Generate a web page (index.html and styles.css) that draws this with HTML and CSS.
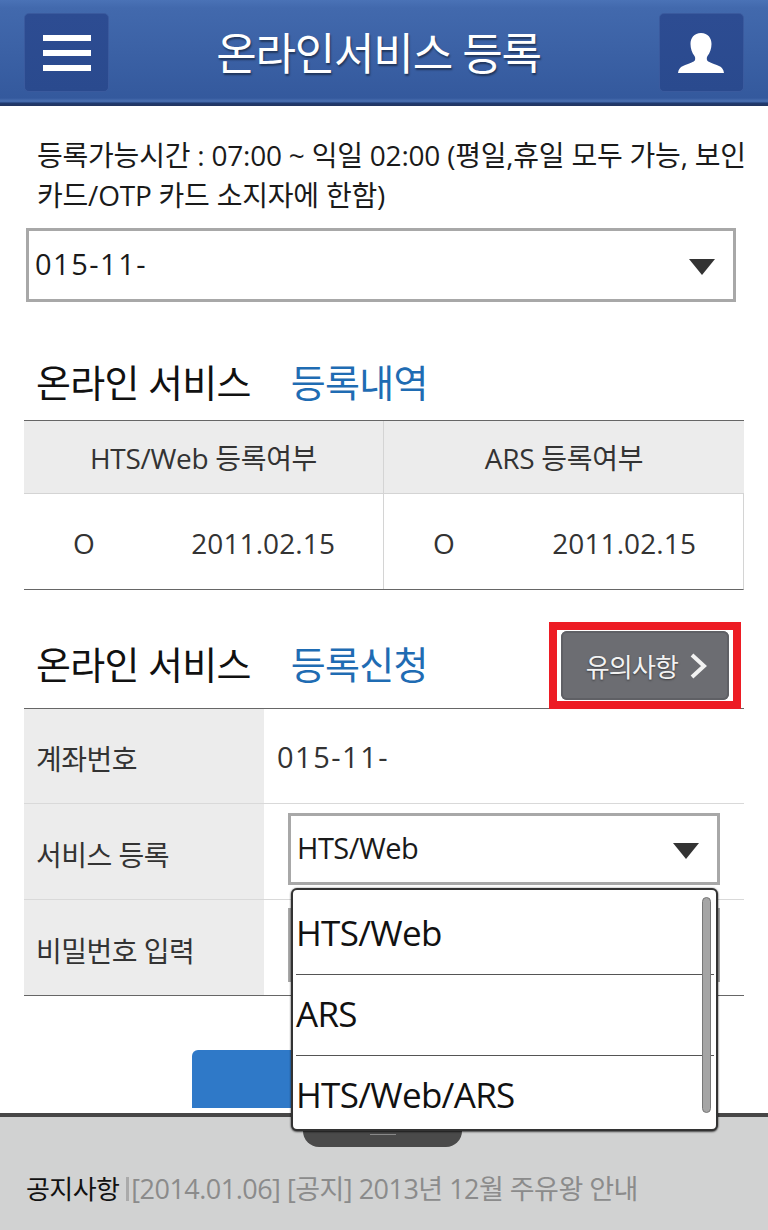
FILE: index.html
```html
<!DOCTYPE html>
<html lang="ko">
<head>
<meta charset="utf-8">
<title>온라인서비스 등록</title>
<link rel="stylesheet" href="styles.css">
</head>
<body>
<div class="page">
  <header class="topbar">
    <div class="iconbtn">
      <svg width="48" height="36" viewBox="0 0 48 36"><path fill="#fff" d="M0 0h48v6H0zM0 15h48v6H0zM0 30h48v6H0z"/></svg>
    </div>
    <h1 class="apptitle">온라인서비스 등록</h1>
    <div class="iconbtn">
      <svg width="46" height="40" viewBox="0 0 46 40"><path fill="#fff" d="M23 0c-7 0-10.500 5-10.500 11 0 4.500 1.500 9 4 12 .8 1 .8 3 .5 4-.5 2-6 3.500-12 6-3 1.200-4.500 3.500-5 7h46c-.5-3.500-2-5.800-5-7-6-2.500-11.500-4-12-6-.3-1-.3-3 .5-4 2.500-3 4-7.500 4-12C33.500 5 30 0 23 0z"/></svg>
    </div>
  </header>
  <main class="content">
    <p class="notice">등록가능시간 : 07:00 ~ 익일 02:00 (평일,휴일 모두 가능, 보인<br>카드/OTP 카드 소지자에 한함)</p>
    <div class="select select-account">
      <span class="select-text">015-11-</span>
      <i class="arrow"></i>
    </div>

    <div class="heading heading-first">
      <h2>온라인 서비스<em>등록내역</em></h2>
    </div>
    <div class="status">
      <div class="status-head">HTS/Web 등록여부</div>
      <div class="status-head">ARS 등록여부</div>
      <div class="status-cell"><span>O</span><span>2011.02.15</span></div>
      <div class="status-cell"><span>O</span><span>2011.02.15</span></div>
    </div>

    <div class="heading heading-second">
      <h2>온라인 서비스<em>등록신청</em></h2>
      <div class="note-frame"><div class="note-btn">유의사항<svg width="18" height="26" viewBox="0 0 18 26"><path fill="none" stroke="#f2f2f2" stroke-width="4" d="M2 2l12 11L2 24"/></svg></div></div>
    </div>
    <div class="form">
      <div class="form-row">
        <div class="form-label">계좌번호</div>
        <div class="form-value form-account">015-11-</div>
      </div>
      <div class="form-row">
        <div class="form-label">서비스 등록</div>
        <div class="form-value">
          <div class="select select-service"><span class="select-text">HTS/Web</span><i class="arrow"></i></div>
        </div>
      </div>
      <div class="form-row form-row-last">
        <div class="form-label">비밀번호 입력</div>
        <div class="form-value"><div class="password"></div></div>
      </div>
    </div>
    <div class="submit"></div>
  </main>
  <footer class="footer">
    <div class="footer-tab"><span></span></div>
    <p class="ticker"><b>공지사항</b><i></i><span>[2014.01.06] [공지] 2013년 12월 주유왕 안내</span></p>
  </footer>
  <div class="popup">
    <div class="popup-item">HTS/Web</div>
    <div class="popup-item">ARS</div>
    <div class="popup-item">HTS/Web/ARS</div>
    <div class="scrollbar"></div>
  </div>
</div>
</body>
</html>
```
FILE: styles.css
```css
* { box-sizing: border-box; }
html, body { margin: 0; padding: 0; }
body { font-family: "Open Sans", "Noto Sans CJK KR", sans-serif; background: #fff; color: #1a1a1a; }
.page { position: relative; width: 768px; height: 1230px; overflow: hidden; display: flex; flex-direction: column; }

.topbar { flex: none; height: 106px; display: flex; align-items: center; justify-content: space-between; padding: 13px 24px 14px;
  background: linear-gradient(#4a72b6 0, #4269ad 8px, #34599d 98px, #4a6fb0 101px, #3f64a6 102px, #1f3a70 103px, #23355f 106px); }
.iconbtn { width: 85px; height: 79px; border-radius: 5px; background: linear-gradient(#2d4c92, #2a4a8e); border: 1px solid #3a5a9e; display: flex; align-items: center; justify-content: center; }
.apptitle { margin: 0 11px 0 0; font-size: 44px; font-weight: 400; color: #fff; text-shadow: 1px 2px 2px rgba(0,0,0,.45); letter-spacing: -1.2px; line-height: 1; }

.content { flex: 1; min-height: 0; overflow: hidden; padding: 0 24px; }
.notice { margin: 29px 0 0 13px; font-size: 28px; line-height: 40px; height: 79px; letter-spacing: -.22px; white-space: nowrap; color: #1a1a1a; }
.select { display: flex; align-items: center; justify-content: space-between; border: 3px solid #a8a8a8; background: #fff; color: #1a1a1a; }
.select-account { margin: 14px 8px 0 2px; height: 74px; padding: 0 18px 0 6px; font-size: 29px; letter-spacing: 1.5px; }
.select-text { padding-bottom: 4px; }
.arrow { width: 0; height: 0; border-left: 13px solid transparent; border-right: 13px solid transparent; border-top: 16px solid #333; margin-top: 4px; }

.heading { display: flex; align-items: center; justify-content: space-between; border-bottom: 1px solid #666; }
.heading-first { margin-top: 48px; height: 71px; padding: 0 0 4px 12px; }
.heading-second { margin-top: 32px; height: 87px; padding-left: 12px; }
.heading h2 { margin: 0; font-size: 38px; font-weight: 400; color: #111; letter-spacing: -.7px; display: flex; gap: 40px; line-height: 1.1; }
.heading em { font-style: normal; color: #1f6cb3; }

.status { display: grid; grid-template-columns: 359px 361px; border-bottom: 1px solid #666; border-right: 1px solid #d4d4d4; }
.status-head { height: 73px; background: #ececec; border-bottom: 1px solid #d4d4d4; display: flex; align-items: center; justify-content: center; font-size: 28px; color: #333; letter-spacing: -.3px; }
.status-head:nth-child(2) { border-left: 1px solid #d4d4d4; }
.status-cell { height: 95px; display: flex; align-items: center; padding: 2px 48px 0 49px; justify-content: space-between; font-size: 28px; color: #333; letter-spacing: .1px; }
.status-cell:nth-child(4) { border-left: 1px solid #d4d4d4; }

.note-frame { align-self: flex-start; height: 87px; margin-right: 3px; padding: 1px 4px; border: 8px solid #ed1c24; background: #fff; }
.note-btn { width: 168px; height: 69px; padding-left: 4px; border-radius: 6px; background: #6c6d72; box-shadow: inset 0 0 0 2px #5f6065; color: #f2f2f2; font-size: 26px; display: flex; align-items: center; justify-content: center; gap: 12px; text-shadow: 0 1px 2px rgba(0,0,0,.5); letter-spacing: -.8px; }

.form-row { display: flex; height: 96px; border-bottom: 1px solid #d9d9d9; }
.form-row:first-child { height: 95px; }
.form-row-last { border-bottom-color: #666; }
.form-label { width: 240px; background: #ececec; padding: 4px 0 0 12px; display: flex; align-items: center; font-size: 28px; color: #333; letter-spacing: -.5px; }
.form-value { flex: 1; display: flex; align-items: flex-start; padding: 9px 24px 0; }
.form-account { padding: 1px 0 0 13px; align-items: center; font-size: 29px; color: #333; letter-spacing: 1.5px; }
.select-service { width: 432px; height: 72px; padding: 0 18px 0 6px; font-size: 29px; letter-spacing: -.5px; }
.password { width: 432px; height: 74px; margin-top: -1px; border: 3px solid #a8a8a8; background: #fff; }

.submit { width: 384px; height: 58px; margin: 54px 0 0 168px; background: #2f79c8; border-radius: 6px 6px 0 0; }

.footer { flex: none; height: 117px; background: #d1d2d2; border-top: 4px solid #474747; position: relative; padding: 54px 0 0 26px; }
.footer-tab { position: absolute; left: 303px; top: 0; width: 159px; height: 30px; background: #4a4a4a; border-radius: 0 0 16px 16px; display: flex; justify-content: center; }
.footer-tab span { width: 26px; height: 1px; margin-top: 17px; background: #888; }
.ticker { margin: 0; display: flex; align-items: center; font-size: 26px; line-height: 36px; letter-spacing: -.6px; }
.ticker b { font-weight: 400; color: #111; }
.ticker i { width: 3px; height: 24px; margin: 0 2px 0 7px; background: #aaa; }
.ticker span { font-size: 27px; letter-spacing: -.52px; color: #8b8b8b; }

.popup { position: absolute; left: 291px; top: 888px; width: 427px; height: 243px; background: #fff; border: 2px solid #333; border-radius: 6px; box-shadow: 0 1px 2px rgba(0,0,0,.6), 0 0 2px rgba(0,0,0,.4); padding: 4px 0 0 3px; }
.popup-item { height: 81px; display: flex; align-items: center; padding: 0 0 4px; font-size: 35px; color: #111; border-bottom: 1px solid #555; margin-right: 2px; letter-spacing: -.7px; }
.popup-item:nth-child(3) { border-bottom: 0; }
.scrollbar { position: absolute; right: 5px; top: 7px; width: 9px; height: 216px; background: #a5a5a5; border: 1px solid #777; border-radius: 5px; }
```
